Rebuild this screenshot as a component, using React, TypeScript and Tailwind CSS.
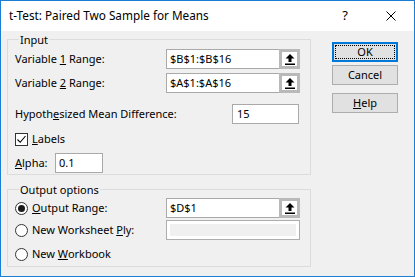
import React from "react";

const FONT = { fontFamily: '"Segoe UI", "Noto Sans", sans-serif' };

function RefButton() {
    return (
        <div className="w-[21px] h-full border-[3px] border-[#b9b9b9] bg-white flex items-center justify-center">
            <svg width="10" height="11" viewBox="0 0 10 11">
                <path d="M5 0 L9.5 4.5 L6.5 4.5 L6.5 8 L3.5 8 L3.5 4.5 L0.5 4.5 Z" fill="#000" />
                <rect x="0" y="9.5" width="10" height="1.5" fill="#000" />
            </svg>
        </div>
    );
}

function RangeField({ value }: { value: string }) {
    return (
        <div className="w-[134px] h-[20px] flex">
            <div className="flex-1 flex items-center pl-[3px] bg-white border border-r-0 border-[#a9a9a9]">{value}</div>
            <RefButton />
        </div>
    );
}

function Radio({ checked }: { checked?: boolean }) {
    return (
        <div className="w-[13px] h-[13px] rounded-full border border-[#333] bg-white flex items-center justify-center">
            {checked && <div className="w-[7px] h-[7px] rounded-full bg-[#1a1a1a]" />}
        </div>
    );
}

function DialogButton({ children, focused }: { children: React.ReactNode; focused?: boolean }) {
    return (
        <div
            className={`w-[66px] h-[20px] bg-[#e1e1e1] flex items-center justify-center ${
                focused ? "border-2 border-[#0078d7] p-[1px]" : "border border-[#adadad]"
            }`}
        >
            {focused ? (
                <div className="w-full h-full border border-dotted border-black flex items-center justify-center">
                    {children}
                </div>
            ) : (
                children
            )}
        </div>
    );
}

export default function App() {
    return (
        <div
            className="w-[415px] h-[277px] border border-[#1a7fd4] bg-[#f0f0f0] text-[11px] text-black flex flex-col"
            style={FONT}
        >
            {/* Title bar */}
            <div className="h-[30px] bg-white flex items-center pl-[8px] pr-[18px] text-[11.75px]">
                <span>t-Test: Paired Two Sample for Means</span>
                <span className="ml-auto text-[13px]">?</span>
                <svg className="ml-[38px]" width="10" height="10" viewBox="0 0 10 10">
                    <path d="M0.5 0.5 L9.5 9.5 M9.5 0.5 L0.5 9.5" stroke="#000" strokeWidth="1" />
                </svg>
            </div>

            <div className="flex">
                {/* Left column: group boxes */}
                <div className="ml-[6px] w-[304px] flex flex-col">
                    <fieldset className="mt-[1px] border border-[#dcdcdc] pl-[7px] pb-[1px]">
                        <legend className="ml-[4px] px-[1px] pt-[2px] leading-[12px]">Input</legend>
                        <div className="mt-[3px] h-[20px] flex items-center">
                            <span className="w-[151px]">Variable <span className="underline">1</span> Range:</span>
                            <RangeField value="$B$1:$B$16" />
                        </div>
                        <div className="mt-[4px] h-[20px] flex items-center">
                            <span className="w-[151px]">Variable <span className="underline">2</span> Range:</span>
                            <RangeField value="$A$1:$A$16" />
                        </div>
                        <div className="mt-[11px] h-[20px] flex items-center">
                            <span className="w-[217px]">Hypoth<span className="underline">e</span>sized Mean Difference:</span>
                            <div className="w-[67px] h-[20px] bg-white border border-[#a9a9a9] pl-[4px] flex items-center">15</div>
                        </div>
                        <div className="mt-[9px] h-[13px] flex items-center">
                            <div className="w-[13px] h-[13px] border border-[#333] bg-white flex items-center justify-center">
                                <svg width="11" height="11" viewBox="0 0 11 11">
                                    <path d="M1.5 5.5 L4.2 8.3 L9.5 2" fill="none" stroke="#000" strokeWidth="1.1" />
                                </svg>
                            </div>
                            <span className="ml-[4px]"><span className="underline">L</span>abels</span>
                        </div>
                        <div className="mt-[7px] h-[20px] flex items-center">
                            <span className="w-[40px]"><span className="underline">A</span>lpha:</span>
                            <div className="w-[48px] h-[20px] bg-white border border-[#a9a9a9] pl-[3px] flex items-center">0.1</div>
                        </div>
                    </fieldset>

                    <fieldset className="mt-[7px] border border-[#dcdcdc] pl-[7px] pb-[2px]">
                        <legend className="ml-[4px] px-[1px] pt-[2px] leading-[12px]">Output options</legend>
                        <div className="mt-[2px] h-[20px] flex items-center">
                            <Radio checked />
                            <span className="ml-[4px] w-[134px]"><span className="underline">O</span>utput Range:</span>
                            <RangeField value="$D$1" />
                        </div>
                        <div className="mt-[2px] h-[20px] flex items-center">
                            <Radio />
                            <span className="ml-[4px] w-[134px]">New Worksheet <span className="underline">P</span>ly:</span>
                            <div className="w-[134px] h-[20px] bg-white border border-[#adadad] pl-[3px] pr-[3px] py-[3px]">
                                <div className="w-full h-full bg-[#f0f0f0]" />
                            </div>
                        </div>
                        <div className="mt-[4px] h-[20px] flex items-center">
                            <Radio />
                            <span className="ml-[4px]">New <span className="underline">W</span>orkbook</span>
                        </div>
                    </fieldset>
                </div>

                {/* Right column: buttons */}
                <div className="ml-[21px] mt-[11px] flex flex-col">
                    <DialogButton focused>OK</DialogButton>
                    <div className="mt-[3px]">
                        <DialogButton>Cancel</DialogButton>
                    </div>
                    <div className="mt-[8px]">
                        <DialogButton>
                            <span><span className="underline">H</span>elp</span>
                        </DialogButton>
                    </div>
                </div>
            </div>
        </div>
    );
}
